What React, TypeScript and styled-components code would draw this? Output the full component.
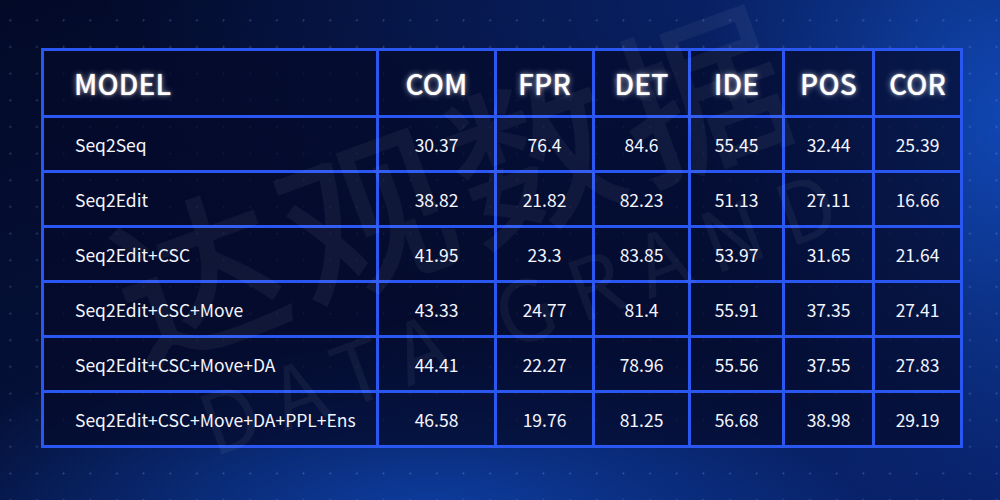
import React from "react";
import styled, { createGlobalStyle } from "styled-components";

const Global = createGlobalStyle`
  html, body { margin: 0; padding: 0; }
  body { width: 1000px; height: 500px; overflow: hidden; background: #030a26; }
`;

const Stage = styled.div`
  position: relative;
  width: 1000px;
  height: 500px;
  box-sizing: border-box;
  padding: 48px 0 0 41px;
  overflow: hidden;
  font-family: "Noto Sans CJK SC", "Noto Sans", sans-serif;
  color: #ffffff;
  background:
    radial-gradient(ellipse 320px 420px at 1010px 120px, rgba(18, 80, 200, 0.85), rgba(18, 80, 200, 0) 100%),
    radial-gradient(ellipse 520px 200px at 430px 520px, rgba(14, 66, 170, 0.9), rgba(14, 66, 170, 0) 100%),
    radial-gradient(ellipse 600px 360px at 700px 0px, rgba(10, 40, 120, 0.7), rgba(10, 40, 120, 0) 100%),
    linear-gradient(160deg, #030a28 0%, #05113a 55%, #081f66 100%);
`;

const Dots = styled.div`
  position: absolute;
  inset: 0;
  pointer-events: none;
  background-image: radial-gradient(circle, rgba(140, 170, 255, 0.28) 0.8px, transparent 1.3px);
  background-size: 26.67px 26.67px;
  background-position: -3px 7px;
`;

const Watermark = styled.div`
  position: absolute;
  left: 88px;
  top: 218px;
  width: 1000px;
  transform: rotate(-20deg);
  transform-origin: 0 0;
  pointer-events: none;
  z-index: 2;
  color: rgba(255, 255, 255, 0.05);
  font-family: "Noto Sans CJK SC", sans-serif;
  display: flex;
  flex-direction: column;
  align-items: flex-start;
  white-space: nowrap;
`;

const WmCn = styled.div`
  font-size: 168px;
  font-weight: 500;
  letter-spacing: 10px;
  line-height: 170px;
  height: 170px;
  padding-left: 0;
`;

const WmEn = styled.div`
  font-size: 84px;
  font-weight: 400;
  letter-spacing: 19px;
  line-height: 84px;
  padding-left: 36px;
  margin-top: 20px;
`;

const Table = styled.table`
  position: relative;
  z-index: 1;
  border-collapse: collapse;
  table-layout: fixed;
  width: 919px;
  border: 3px solid #2a56f2;
`;

const HeadCell = styled.th<{ $left?: boolean }>`
  height: 64px;
  padding: 0 0 0 ${(p) => (p.$left ? "30px" : "0")};
  border: 3px solid #2a56f2;
  background: rgba(4, 10, 42, 0.72);
  text-align: ${(p) => (p.$left ? "left" : "center")};
  font-size: 28px;
  font-weight: 500;
  letter-spacing: 0.2px;
  color: #ffffff;
  text-shadow: 0 0 6px rgba(255, 255, 255, 0.55), 0 0 2px rgba(255, 255, 255, 0.6);
  vertical-align: middle;
`;

const Cell = styled.td<{ $left?: boolean }>`
  height: 52px;
  padding: 0 0 0 ${(p) => (p.$left ? "31px" : "0")};
  border: 3px solid #2a56f2;
  background: rgba(4, 10, 42, 0.72);
  text-align: ${(p) => (p.$left ? "left" : "center")};
  font-size: 17.5px;
  font-weight: 400;
  color: #f4f6ff;
  vertical-align: middle;
  white-space: nowrap;
`;

const widths = [335, 118, 98, 96, 94, 90, 88];
const headers = ["MODEL", "COM", "FPR", "DET", "IDE", "POS", "COR"];
const rows: string[][] = [
  ["Seq2Seq", "30.37", "76.4", "84.6", "55.45", "32.44", "25.39"],
  ["Seq2Edit", "38.82", "21.82", "82.23", "51.13", "27.11", "16.66"],
  ["Seq2Edit+CSC", "41.95", "23.3", "83.85", "53.97", "31.65", "21.64"],
  ["Seq2Edit+CSC+Move", "43.33", "24.77", "81.4", "55.91", "37.35", "27.41"],
  ["Seq2Edit+CSC+Move+DA", "44.41", "22.27", "78.96", "55.56", "37.55", "27.83"],
  ["Seq2Edit+CSC+Move+DA+PPL+Ens", "46.58", "19.76", "81.25", "56.68", "38.98", "29.19"],
];

export default function App() {
  return (
    <>
      <Global />
      <Stage>
        <Dots />
        <Watermark>
          <WmCn>达观数据</WmCn>
          <WmEn>DATA GRAND</WmEn>
        </Watermark>
        <Table>
          <colgroup>
            {widths.map((w, i) => (
              <col key={i} style={{ width: w }} />
            ))}
          </colgroup>
          <thead>
            <tr>
              {headers.map((h, i) => (
                <HeadCell key={h} $left={i === 0}>
                  {h}
                </HeadCell>
              ))}
            </tr>
          </thead>
          <tbody>
            {rows.map((r) => (
              <tr key={r[0]}>
                {r.map((v, i) => (
                  <Cell key={i} $left={i === 0}>
                    {v}
                  </Cell>
                ))}
              </tr>
            ))}
          </tbody>
        </Table>
      </Stage>
    </>
  );
}
